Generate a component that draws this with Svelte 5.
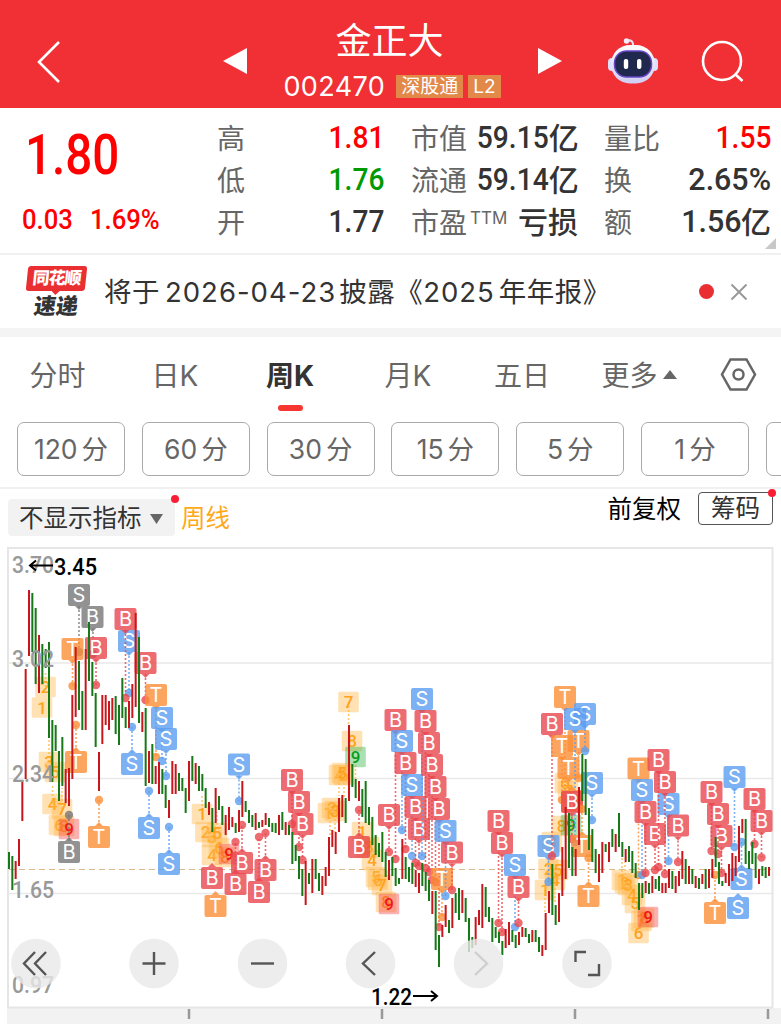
<script lang="ts">
	type Marker = [string, string, number, number, number?, number?];

	const stats = [
		[
			{ label: '高', value: '1.81', tone: 'up' },
			{ label: '低', value: '1.76', tone: 'down' },
			{ label: '开', value: '1.77', tone: '' }
		],
		[
			{ label: '市值', value: '59.15', unit: '亿', tone: '' },
			{ label: '流通', value: '59.14', unit: '亿', tone: '' },
			{ label: '市盈', sup: 'TTM', value: '', unit: '亏损', tone: '' }
		],
		[
			{ label: '量比', value: '1.55', tone: 'up' },
			{ label: '换', value: '2.65%', tone: 'wide' },
			{ label: '额', value: '1.56', unit: '亿', tone: 'wide' }
		]
	];

	const tabs = ['分时', '日K', '周K', '月K', '五日', '更多'];
	const periods = ['120', '60', '30', '15', '5', '1', ''];

	// one entry per week: direction, high, low
	const weeks = `g852-869 g856-890 r861-879 r839-866 r780-821 r669-779 r590-656 g593-652 g608-684 r635-693
		g644-684 g649-668 g642-738 g720-782 g725-751 g751-801 g737-786 r769-803 r768-806 r695-779
		r647-717 g661-710 g691-730 r649-730 g622-681 g662-696 g693-747 r752-791 r695-744 r695-725
		r701-730 r698-720 g696-734 g705-745 g678-718 g707-728 r701-728 r684-718 r613-707 g637-723
		r712-732 g708-786 r751-783 g744-784 r766-784 r762-794 g769-794 g785-808 r800-818 r761-794
		r764-794 g773-791 g778-791 g788-813 r761-801 g756-781 r763-784 g766-791 g774-791 g788-808
		r802-815 g808-832 r788-823 g796-810 g806-825 r815-835 r807-830 r817-827 g823-833 r810-832
		r781-817 g801-812 g810-823 g815-827 r813-830 g822-828 r820-827 r813-825 g818-827 g823-832
		g823-833 r815-835 g812-830 r822-835 g825-835 g832-864 g845-861 g856-879 g869-896 r861-905
		g873-884 r859-893 g859-879 g873-891 r876-895 r867-886 r837-876 r830-847 r832-854 r798-832
		r795-817 g798-823 r725-801 g764-787 g779-798 r781-801 g789-817 g781-823 g807-825 g817-845
		g835-855 g843-857 g832-862 g852-877 r860-880 g857-876 g868-886 g878-884 r839-879 g857-879
		g867-882 g863-884 r870-887 r873-893 g863-886 g872-891 g880-901 r891-914 g891-950 g935-967
		r925-937 r905-927 g920-933 r898-928 g893-913 g888-920 r890-913 g898-922 g918-952 g937-948
		r917-945 r910-925 r884-928 g887-917 g907-922 g918-942 g927-938 g932-943 g941-955 r929-948
		r922-945 g930-942 g935-948 r932-945 r927-937 g928-937 g934-943 r930-942 g930-942 g937-952
		r945-956 r913-950 r891-913 g864-915 g905-925 r893-922 r847-896 r807-879 g813-868 g847-876
		r849-876 r787-845 g754-801 g759-815 g808-850 g829-862 g849-873 r854-882 r842-873 g844-852
		r842-862 g829-847 r834-852 g813-847 g842-857 r849-862 g846-862 g851-873 g863-878 g883-910
		g883-898 r881-893 g883-894 r876-893 g879-889 g876-891 r883-893 r883-893 r869-888 g871-889
		r876-893 r871-886 r851-879 g859-884 r866-884 g869-884 r876-888 g878-889 r874-884 g869-889
		r869-888 r859-878 g837-867 g862-884 g881-886 r873-883 r864-886 r853-881 r856-876 r826-862
		r819-833 g819-864 g851-869 g842-864 g853-878 r869-884 g866-876 g867-878 r867-876`
		.trim()
		.split(/\s+/)
		.map((w, i) => {
			const [high, low] = w.slice(1).split('-').map(Number);
			return { x: 9 + i * 3.3333, up: w[0] === 'r', high, low };
		});

	// nine-turn counters: digit, tone, x, y, stem end
	const counts: Marker[] = [
		['2', 'n', 45.5, 687, 45.5, 672], ['1', 'n', 42, 707.5], ['3', 'n', 49, 762, 49, 740], ['5', 'n', 55, 772],
		['4', 'n', 52.5, 804, 52.5, 784], ['7', 'n', 62, 809, 62, 788], ['6', 'n', 59, 825], ['8', 'n', 64, 826], ['9', 'hot', 69, 829],
		['1', 'n', 202, 814, 202, 794], ['2', 'n', 205.5, 832], ['3', 'n', 212, 837], ['5', 'n', 217, 833, 217, 812],
		['4', 'n', 212, 855], ['6', 'n', 219, 848], ['8', 'n', 225, 857], ['9', 'hot', 229, 854],
		['7', 'n', 348.5, 702, 348.5, 725], ['8', 'n', 352, 741], ['9', 'cold', 355.5, 757, 355.5, 780],
		['4', 'n', 339, 775, 339, 796], ['6', 'n', 344, 775, 344, 798], ['5', 'n', 342, 773],
		['1', 'n', 328, 813, 330, 835], ['2', 'n', 332, 808], ['3', 'n', 335, 811, 335, 832],
		['1', 'n', 362, 832], ['2', 'n', 366, 848], ['3', 'n', 369, 847], ['4', 'n', 372, 860],
		['5', 'n', 376, 877], ['6', 'n', 378, 880], ['7', 'n', 382, 885], ['8', 'n', 386, 902], ['9', 'hot', 389, 904],
		['1', 'n', 545, 890, 545, 912], ['2', 'n', 548.5, 869], ['3', 'n', 552, 842], ['4', 'n', 555, 880, 555, 904],
		['5', 'n', 558, 870], ['6', 'n', 565, 783], ['7', 'n', 568, 791], ['8', 'n', 561.5, 826], ['9', 'cold', 571, 825],
		['1', 'n', 622, 880, 622, 858], ['2', 'n', 625, 883, 625, 862], ['3', 'n', 628, 885], ['4', 'n', 632, 895],
		['5', 'n', 635, 903], ['7', 'n', 641.5, 921], ['8', 'n', 644, 918], ['6', 'n', 638.5, 933], ['9', 'hot', 648, 917]
	];

	// trade flags: letter, tone, x, y, dot x, dot y
	const flags: Marker[] = [
		['S', 'gray', 79, 595, 79, 652], ['B', 'gray', 92.5, 617, 93, 654], ['T', 't', 72.5, 649, 72.5, 686],
		['B', 'b', 96, 648, 96, 685], ['T', 't', 76, 762, 76, 725], ['S', 's', 129, 641, 129, 693],
		['B', 'b', 125.5, 619, 125.5, 698], ['B', 'b', 145.5, 663, 145.5, 700], ['T', 't', 156, 695, 156, 757],
		['S', 's', 162, 718, 162, 761], ['S', 's', 166, 739, 166, 776], ['S', 's', 132, 764, 132, 727],
		['S', 's', 149, 828, 149, 791], ['S', 's', 169, 864, 169, 827], ['T', 't', 99, 837, 99, 800],
		['B', 'gray', 69, 852, 69, 815], ['S', 's', 239, 764.5, 239, 801], ['B', 'b', 212, 878],
		['B', 'b', 235.5, 884, 235.5, 842], ['B', 'b', 242, 863, 242, 825], ['B', 'b', 259, 892, 259, 837],
		['B', 'b', 265.5, 870, 265.5, 833], ['T', 't', 215.5, 906], ['B', 'b', 292, 780, 292, 824],
		['B', 'b', 299, 802, 299, 847], ['B', 'b', 302.5, 824, 302.5, 860], ['B', 'b', 359, 847, 359, 810],
		['B', 'b', 395.5, 720, 395.5, 859], ['S', 's', 402, 741, 402, 830], ['B', 'b', 405.5, 763, 405.5, 849],
		['S', 's', 412, 785, 412, 856], ['B', 'b', 415.5, 807, 415.5, 863], ['B', 'b', 419, 829, 419, 866],
		['B', 'b', 389, 815, 389, 852], ['S', 's', 422, 699, 422, 856], ['B', 'b', 425.5, 721, 425.5, 868],
		['B', 'b', 429, 743, 429, 872], ['B', 'b', 432, 765, 432, 880], ['B', 'b', 435.5, 787, 435.5, 882],
		['B', 'b', 439, 809, 439, 927], ['T', 't', 442, 879, 442, 917], ['S', 's', 445.5, 831, 445.5, 896],
		['B', 'b', 452, 852.5, 452, 890], ['B', 'b', 498.5, 821, 498.5, 923], ['B', 'b', 502, 843, 502, 932],
		['S', 's', 515, 865, 515, 927], ['B', 'b', 518.5, 887, 518.5, 923], ['S', 's', 548.5, 846, 548.5, 882],
		['B', 'b', 552, 724, 552, 856], ['T', 't', 565, 697, 565, 800], ['T', 't', 562, 746, 562, 800],
		['T', 't', 578.5, 741, 578.5, 778], ['T', 't', 568.5, 768, 568.5, 806], ['S', 's', 585, 714, 585, 751],
		['S', 's', 575, 719, 575, 842], ['S', 's', 592, 783, 592, 820], ['T', 't', 572, 801],
		['B', 'b', 572, 802, 572, 839], ['T', 't', 582, 846, 582, 809], ['T', 't', 588.5, 896, 588.5, 858],
		['T', 't', 638.5, 768.5, 638.5, 875], ['S', 's', 642, 790, 642, 875], ['B', 'b', 645.5, 812, 645.5, 873],
		['B', 'b', 655, 834, 655, 870], ['S', 's', 668.5, 804, 668.5, 861], ['B', 'b', 658.5, 760, 658.5, 867],
		['B', 'b', 665, 782, 665, 874], ['B', 'b', 678, 825.5, 678, 862], ['B', 'b', 721.5, 836, 721.5, 873],
		['B', 'b', 711.5, 792, 711.5, 851], ['B', 'b', 718, 814, 718, 854], ['T', 't', 715, 913, 715, 875],
		['S', 's', 734.5, 777, 734.5, 847], ['S', 's', 741.5, 879, 741.5, 842], ['S', 's', 738, 908],
		['B', 'b', 754.5, 799, 754.5, 844], ['B', 'b', 761.5, 821, 761.5, 857.5]
	];

	const prices = [
		{ text: '3.70', y: 573 },
		{ text: '3.02', y: 667 },
		{ text: '2.34', y: 782 },
		{ text: '1.65', y: 897.5 },
		{ text: '0.97', y: 992.5 }
	];

	const tip = (x: number, y: number, half: number, down: boolean) => {
		const s = down ? 1 : -1;
		return `M${x - 4} ${y + s * half}h8l-4 ${s * 4}z`;
	};
</script>

<div class="screen">
	<header>
		<svg class="bar-icon back" width="26" height="44" viewBox="0 0 26 44">
			<path d="M23 2 3 22l20 20" />
		</svg>
		<svg class="prev" width="24" height="26" viewBox="0 0 24 26"><path d="M24 0v26L0 13z" fill="#fff" /></svg>
		<div class="title">
			<h1>金正大</h1>
			<div class="code">
				<span>002470</span>
				<b>深股通</b>
				<b>L2</b>
			</div>
		</div>
		<svg class="next" width="24" height="26" viewBox="0 0 24 26"><path d="M0 0v26l24-13z" fill="#fff" /></svg>
		<svg class="robot" width="50" height="46" viewBox="0 0 50 46">
			<defs>
				<linearGradient id="shell" x1="0" y1="0" x2="0" y2="1">
					<stop offset="0" stop-color="#fff" />
					<stop offset="1" stop-color="#cfcdf2" />
				</linearGradient>
			</defs>
			<path d="M19 2.500q7-1 6 6" fill="none" stroke="#f0dcec" stroke-width="2.200" />
			<circle cx="18.500" cy="3" r="2.700" fill="#f2edfa" />
			<rect x="0" y="20" width="8" height="13" rx="4" fill="#dce0fb" />
			<rect x="42" y="20" width="8" height="13" rx="4" fill="#dce0fb" />
			<rect x="3" y="7" width="44" height="38.500" rx="19" fill="url(#shell)" />
			<rect x="6.500" y="13" width="37" height="26" rx="12" fill="#20284d" stroke="#6846c8" stroke-width="1.500" />
			<rect x="15.800" y="21" width="4.400" height="10" rx="2" fill="#fff" />
			<rect x="29" y="21" width="4.400" height="10" rx="2" fill="#fff" />
		</svg>
		<svg class="bar-icon search" width="44" height="44" viewBox="0 0 44 44">
			<circle cx="21" cy="21" r="19" />
			<path d="m34 34 7.500 7" />
		</svg>
	</header>

	<section class="quote">
		<div class="last">
			<strong>1.80</strong>
			<p><span>0.03</span><span>1.69%</span></p>
		</div>
		{#each stats as column}
			<dl>
				{#each column as row}
					<div>
						<dt>{row.label}{#if row.sup}<sup>{row.sup}</sup>{/if}</dt>
						<dd class={row.tone}><i>{row.value}</i>{row.unit ?? ''}</dd>
					</div>
				{/each}
			</dl>
		{/each}
		<svg class="corner" width="11" height="11" viewBox="0 0 11 11"><path d="M11 0v11H0z" fill="#c8c8c8" /></svg>
	</section>

	<section class="news">
		<div class="logo">
			<span class="brand">同花顺</span>
			<span class="sub">速递</span>
		</div>
		<p>将于<i>2026-04-23</i>披露《<i class="year">2025</i>年年报》</p>
		<span class="dot"></span>
		<svg width="18" height="18" viewBox="0 0 18 18"><path d="m1.500 1.500 15 15m0-15-15 15" stroke="#999" stroke-width="2" /></svg>
	</section>

	<nav>
		{#each tabs as tab}
			<span class="tab" class:active={tab === '周K'}>
				{tab}{#if tab === '更多'}<svg width="14" height="9" viewBox="0 0 14 9"><path d="M7 0l7 9H0z" fill="#666" /></svg>{/if}
			</span>
		{/each}
		<svg class="hex" width="37" height="33" viewBox="0 0 37 33">
			<path d="M10.500 1.500h16l8.500 15-8.500 15h-16L2 16.500z" />
			<circle cx="18.500" cy="16.500" r="5" />
		</svg>
	</nav>

	<div class="periods">
		{#each periods as p}
			<button>{#if p}{p}<span>分</span>{/if}</button>
		{/each}
	</div>

	<div class="tools">
		<span class="indicator">不显示指标<svg width="13" height="10" viewBox="0 0 13 10"><path d="M0 0h13L6.500 10z" fill="#666" /></svg></span>
		<span class="week">周线</span>
		<span class="adjust">前复权</span>
		<span class="chips">筹码</span>
	</div>

	<svg class="chart" width="781" height="480" viewBox="0 544 781 480">
		<rect x="7" y="1008" width="774" height="16" fill="#f2f2f2" />
		<rect x="8" y="548" width="764.500" height="459.500" fill="#fff" stroke="#e6e6e6" stroke-width="2" />
		<path d="M9 663H772M9 778.500H772M9 893.500H772" stroke="#e9e9e9" stroke-width="1.300" />
		<path d="M9 869.500H771" stroke="#dcb98a" stroke-width="1.200" stroke-dasharray="6 4" />

		{#each counts as [text, tone, x, y, sx, sy]}
			<g class="count {tone}">
				{#if sx !== undefined}<path class="stem" d="M{sx} {y}V{sy}" />{/if}
				<rect x={x - 10.3} y={y - 10.3} width="20.600" height="20.600" rx="1.500" />
				<text {x} y={y + 6} text-anchor="middle">{text}</text>
			</g>
		{/each}

		{#each flags as [text, tone, x, y, dx, dy]}
			<g class="flag {tone}">
				{#if dx !== undefined && dy !== undefined}
					<path class="stem" d="M{dx} {dy > y ? y + 11 : y - 11}V{dy}" />
					<circle cx={dx} cy={dy} r="4.200" />
				{/if}
				<rect x={x - 11} y={y - 11} width="22" height="22" rx="2" />
				<path d={tip(x, y, 11, dy !== undefined && dy > y)} />
				<text {x} y={y + 7} text-anchor="middle">{text}</text>
			</g>
		{/each}

		{#each weeks as w}
			<rect x={w.x - 1} y={w.high} width="2" height={w.low - w.high} fill={w.up ? '#c8171c' : '#177817'} />
		{/each}

		{#each prices as p}
			<text class="price" x="12" y={p.y} textLength="42" lengthAdjust="spacingAndGlyphs">{p.text}</text>
		{/each}
		<text class="extreme" x="54" y="574.500" textLength="43" lengthAdjust="spacingAndGlyphs">3.45</text>
		<path class="arrow" d="M53 565.500H30m6-5-6 5 6 5" />
		<text class="extreme" x="371" y="1005" textLength="41" lengthAdjust="spacingAndGlyphs">1.22</text>
		<path class="arrow" d="M413 996h24m-6-5 6 5-6 5" />

		{#each [36, 154, 262.5, 370.5, 478.5, 587] as cx}
			<circle {cx} cy="963.500" r="24.800" fill="#e9e9e9" fill-opacity=".8" />
		{/each}
		<g class="control">
			<path d="m35 952-11 11.500L35 975m11-23-11 11.500L46 975" />
			<path d="M142.500 963.500h23M154 952v23" />
			<path d="M251 963.500h23" />
			<path d="m375 952-12 11.500L375 975" />
			<path d="m475 952 12 11.500L475 975" stroke="#cfcfcf" />
			<path d="M575.500 962v-10H586M599 964v11h-11" />
		</g>
		<path d="M189 1009v10M382 1009v10M575 1009v10M768 1009v10" stroke="#999" stroke-width="2.500" />
	</svg>
</div>

<style>
	:global(body) {
		margin: 0;
		background: #fff;
	}
	.screen {
		width: 781px;
		height: 1024px;
		overflow: hidden;
		font-family: Inter, 'Noto Sans CJK SC', sans-serif;
		color: #333;
	}
	h1,
	p,
	dl,
	dd {
		margin: 0;
	}
	i {
		font-style: normal;
	}

	header {
		display: flex;
		height: 108px;
		background: #f03035;
		color: #fff;
	}
	header > svg {
		flex: none;
	}
	.bar-icon {
		fill: none;
		stroke: #fff;
		stroke-width: 2.600;
	}
	.back {
		margin: 40px 0 0 36px;
	}
	.prev {
		margin: 48px 0 0 161px;
	}
	.title {
		display: flex;
		flex-direction: column;
		align-items: center;
		width: 290px;
	}
	.title h1 {
		margin-top: 18px;
		margin-left: -5px;
		font-size: 36px;
		font-weight: 400;
		line-height: 46px;
	}
	.code {
		display: flex;
		align-items: center;
		height: 28px;
		margin-top: 8px;
		gap: 5px;
		font-size: 27px;
	}
	.code span {
		margin-right: 6px;
		letter-spacing: 0.4px;
	}
	.code b {
		padding: 0 5px;
		background: #e2894a;
		font-size: 19px;
		font-weight: 400;
		line-height: 23px;
	}
	.next {
		margin: 48px 0 0 1px;
	}
	.robot {
		margin: 38px 0 0 46px;
	}
	.search {
		margin: 40px 0 0 43px;
	}

	.quote {
		position: relative;
		display: flex;
		height: 145px;
		border-bottom: 2px solid #f0f0f0;
	}
	.last {
		width: 217px;
		color: #f00;
		font-family: Roboto, sans-serif;
		font-weight: 500;
	}
	.last strong {
		display: block;
		margin: 17px 0 0 25px;
		font-size: 56px;
		font-weight: 500;
		line-height: 60px;
		transform: scaleX(0.85);
		transform-origin: left;
	}
	.last p {
		display: flex;
		gap: 19px;
		margin: 19px 0 0 22px;
		font-size: 28.500px;
		line-height: 32px;
		transform: scaleX(0.9);
		transform-origin: left;
	}
	dl {
		padding-top: 9px;
		font-size: 28px;
		line-height: 42px;
	}
	dl:nth-of-type(1) {
		width: 167px;
		margin-right: 27px;
	}
	dl:nth-of-type(2) {
		width: 167px;
		margin-right: 26px;
	}
	dl:nth-of-type(3) {
		width: 167px;
	}
	dl div {
		display: flex;
		justify-content: space-between;
		height: 42px;
	}
	dt {
		position: relative;
		top: 1px;
		color: #666;
		white-space: nowrap;
	}
	dt sup {
		position: relative;
		top: -9px;
		margin-left: 3px;
		font-size: 17px;
		line-height: 0;
		vertical-align: baseline;
	}
	dd {
		display: flex;
		justify-content: flex-end;
		font-size: 30px;
		font-weight: 500;
		white-space: nowrap;
	}
	dd i {
		position: relative;
		top: -1px;
		font-family: Roboto, sans-serif;
		font-size: 32px;
		transform: scaleX(0.88);
		transform-origin: right;
	}
	.wide i {
		transform: scaleX(0.95);
	}
	.up {
		color: #f00;
	}
	.down {
		color: #090;
	}
	.corner {
		position: absolute;
		right: 5px;
		bottom: 4px;
	}

	.news {
		display: flex;
		align-items: center;
		height: 73px;
		border-bottom: 9px solid #f4f4f4;
	}
	.logo {
		display: flex;
		flex-direction: column;
		align-items: center;
		width: 61px;
		margin: 0 17px 0 26px;
		font-weight: 900;
	}
	.brand {
		position: relative;
		width: 59px;
		background: #e92f31;
		border-radius: 3px;
		color: #fff;
		font-size: 17px;
		line-height: 25px;
		text-align: center;
		letter-spacing: -1px;
		transform: skewX(-6deg);
	}
	.brand::after {
		content: '';
		position: absolute;
		top: 24px;
		left: 25px;
		border: 5px solid transparent;
		border-top-color: #e92f31;
	}
	.sub {
		margin-top: 4px;
		font-size: 22px;
		line-height: 22px;
		transform: skewX(-8deg);
	}
	.news p {
		width: 595px;
		font-size: 27.500px;
		line-height: 40px;
		white-space: nowrap;
		letter-spacing: 0.5px;
	}
	.news p i {
		margin: 0 3px 0 5px;
		letter-spacing: 1px;
	}
	.news p .year {
		margin: 0 4px 0 0;
	}
	.dot {
		width: 15px;
		height: 15px;
		margin-right: 16px;
		border-radius: 50%;
		background: #e92f31;
	}

	nav {
		display: grid;
		grid-template-columns: 117px 118px 112px 124px 104px 130px 66px;
		height: 85px;
	}
	.tab {
		position: relative;
		left: -1px;
		font-size: 28px;
		line-height: 78px;
		text-align: center;
		color: #666;
	}
	.tab svg {
		margin-left: 5px;
		vertical-align: 7px;
	}
	.active {
		color: #333;
		font-weight: 700;
	}
	.active::after {
		content: '';
		position: absolute;
		bottom: 11px;
		left: 44px;
		width: 25px;
		height: 6px;
		border-radius: 3px;
		background: #f9352f;
	}
	.hex {
		margin: 21px 0 0 15px;
		fill: none;
		stroke: #666;
		stroke-width: 2.500;
	}

	.periods {
		display: flex;
		gap: 16.8px;
		height: 65px;
		padding-left: 17px;
		border-bottom: 2px solid #f0f0f0;
		overflow: hidden;
	}
	.periods button {
		flex: none;
		box-sizing: border-box;
		width: 108px;
		height: 54px;
		padding: 0 0 3px;
		border: 1.500px solid #aaa;
		border-radius: 7px;
		background: #fff;
		color: #666;
		font: 26.500px Inter, 'Noto Sans CJK SC', sans-serif;
	}
	.periods span {
		margin-left: 4px;
	}

	.tools {
		display: flex;
		align-items: flex-start;
		height: 55px;
		font-size: 24.500px;
	}
	.indicator {
		position: relative;
		width: 156px;
		height: 37px;
		margin: 10px 6px 0 8px;
		padding-left: 11px;
		border-radius: 4px;
		background: #f2f2f2;
		line-height: 39px;
		white-space: nowrap;
	}
	.indicator svg {
		margin-left: 8px;
		vertical-align: 3px;
	}
	.indicator::after,
	.chips::after {
		content: '';
		position: absolute;
		top: -4px;
		right: -4px;
		width: 8px;
		height: 8px;
		border-radius: 50%;
		background: #fb1d34;
	}
	.week {
		margin-top: 10px;
		color: #ffa918;
		line-height: 39px;
	}
	.adjust {
		margin: 3px 17px 0 auto;
		color: #000;
		line-height: 35px;
	}
	.chips {
		position: relative;
		width: 73px;
		margin: 3px 8px 0 0;
		border: 1.500px solid #555;
		border-radius: 4px;
		line-height: 31px;
		text-align: center;
	}

	.chart {
		display: block;
	}
	.price,
	.extreme {
		font-family: Roboto, sans-serif;
		font-size: 24.500px;
		font-weight: 500;
	}
	.price {
		fill: #999;
	}
	.extreme {
		fill: #000;
	}
	.arrow {
		fill: none;
		stroke: #000;
		stroke-width: 2;
	}
	.count {
		fill: #ffa21c;
	}
	.count rect {
		fill: #ffb84d;
		fill-opacity: 0.42;
	}
	.count text {
		font: 500 17px Roboto, sans-serif;
	}
	.hot {
		fill: #f01818;
	}
	.hot rect {
		fill: #f33d3d;
		fill-opacity: 0.4;
	}
	.cold {
		fill: #0a9c1d;
	}
	.cold rect {
		fill: #35b548;
		fill-opacity: 0.42;
	}
	.stem {
		fill: none;
		stroke-width: 1.600;
		stroke-dasharray: 2 2;
	}
	.count .stem {
		stroke: #ffc76f;
	}
	.flag rect,
	.flag path,
	.flag circle {
		opacity: 0.8;
	}
	.flag text {
		fill: #fff;
		font: 20px Inter, sans-serif;
	}
	.gray {
		fill: #777;
		stroke: none;
	}
	.gray .stem {
		stroke: #777;
	}
	.b {
		fill: #e9474e;
	}
	.b .stem {
		stroke: #e9474e;
	}
	.s {
		fill: #5b9df0;
	}
	.s .stem {
		stroke: #5b9df0;
	}
	.t {
		fill: #fb8f37;
	}
	.t .stem {
		stroke: #fb8f37;
	}
	.control {
		fill: none;
		stroke: #555;
		stroke-width: 2.400;
	}
</style>
